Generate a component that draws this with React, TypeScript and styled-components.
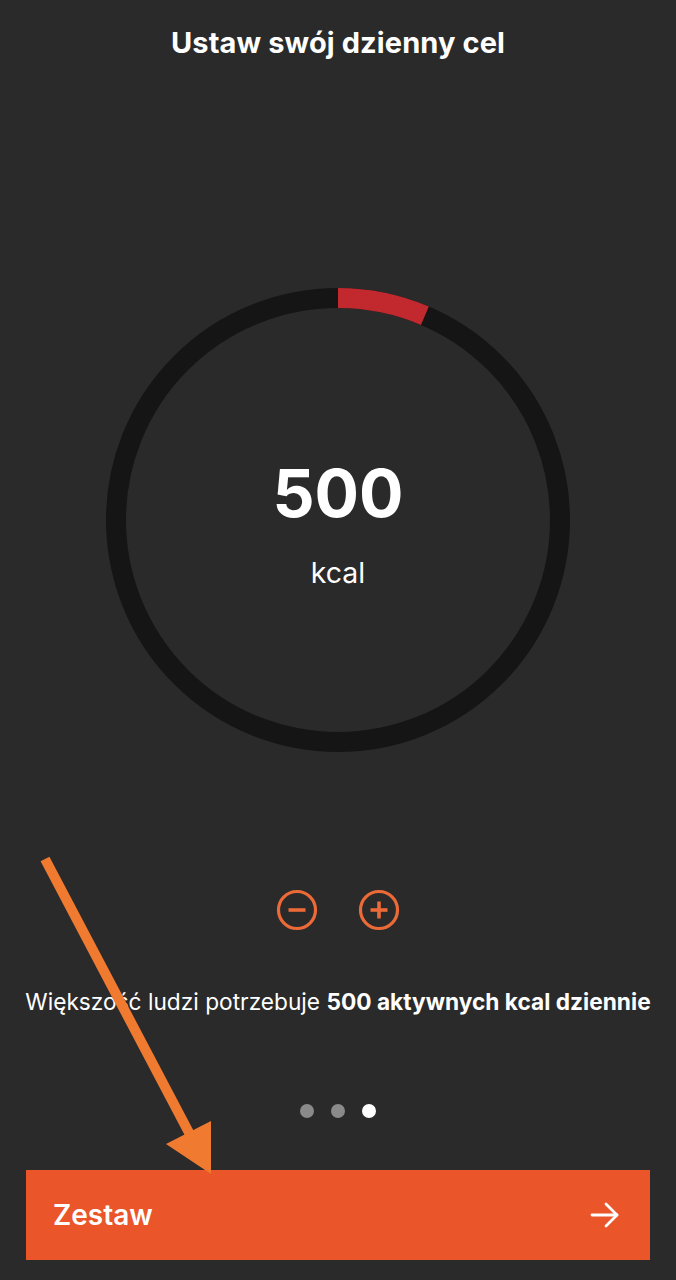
import { createGlobalStyle } from 'styled-components'
import styled from 'styled-components'

const GlobalStyle = createGlobalStyle`
  html, body {
    margin: 0;
    padding: 0;
    background: #2a2a2a;
  }
  body {
    font-family: 'Inter', 'Noto Sans', sans-serif;
    color: #fff;
  }
`

const Screen = styled.div`
  position: relative;
  width: 676px;
  height: 1280px;
  background: #2a2a2a;
  display: flex;
  flex-direction: column;
  align-items: center;
  overflow: hidden;
`

const Title = styled.h1`
  margin: 26px 0 0;
  font-size: 29px;
  font-weight: 700;
  line-height: 34px;
  letter-spacing: 0.1px;
`

const Dial = styled.div`
  position: relative;
  box-sizing: border-box;
  margin-top: 228px;
  padding-top: 10px;
  width: 464px;
  height: 464px;
  display: flex;
  flex-direction: column;
  align-items: center;
  justify-content: center;
`

const Ring = styled.svg`
  position: absolute;
  inset: 0;
`

const Value = styled.div`
  position: relative;
  font-size: 66px;
  font-weight: 700;
  line-height: 64px;
`

const Unit = styled.div`
  position: relative;
  margin-top: 32px;
  font-size: 28.5px;
  font-weight: 400;
  line-height: 32px;
`

const Controls = styled.div`
  margin-top: 136px;
  display: flex;
  gap: 38px;
`

const RoundButton = styled.button`
  width: 44px;
  height: 44px;
  padding: 0;
  border: none;
  background: none;
  cursor: pointer;
  display: flex;
  align-items: center;
  justify-content: center;
`

const Hint = styled.p`
  margin: 57px 0 0;
  font-size: 22.7px;
  line-height: 26px;
  font-weight: 400;
  white-space: nowrap;

  b {
    font-weight: 700;
  }
`

const Dots = styled.div`
  margin-top: 89px;
  display: flex;
  gap: 17px;
`

const Dot = styled.span<{ active?: boolean }>`
  width: 14px;
  height: 14px;
  border-radius: 50%;
  background: ${p => (p.active ? '#ffffff' : '#8a8a8a')};
`

const CtaButton = styled.button`
  margin-top: 52px;
  width: 624px;
  height: 90px;
  border: none;
  background: #ea5529;
  color: #fff;
  display: flex;
  align-items: center;
  justify-content: space-between;
  padding: 0 30px 0 27px;
  font-family: 'Inter', 'Noto Sans', sans-serif;
  font-size: 28px;
  font-weight: 600;
  cursor: pointer;
`

const Annotation = styled.svg`
  position: absolute;
  left: 0;
  top: 0;
  pointer-events: none;
`

const ORANGE = '#ec6a37'

function MinusIcon () {
  return (
    <svg width="44" height="44" viewBox="0 0 44 44">
      <circle cx="22" cy="22" r="18.5" fill="none" stroke={ORANGE} strokeWidth="3.2" />
      <line x1="13.5" y1="22" x2="30.5" y2="22" stroke={ORANGE} strokeWidth="3.6" />
    </svg>
  )
}

function PlusIcon () {
  return (
    <svg width="44" height="44" viewBox="0 0 44 44">
      <circle cx="22" cy="22" r="18.5" fill="none" stroke={ORANGE} strokeWidth="3.2" />
      <line x1="13.5" y1="22" x2="30.5" y2="22" stroke={ORANGE} strokeWidth="3.6" />
      <line x1="22" y1="13.5" x2="22" y2="30.5" stroke={ORANGE} strokeWidth="3.6" />
    </svg>
  )
}

function ArrowRight () {
  return (
    <svg width="30" height="30" viewBox="0 0 30 30" fill="none" stroke="#fff" strokeWidth="2.8" strokeLinecap="round" strokeLinejoin="round">
      <line x1="2" y1="15" x2="27" y2="15" />
      <polyline points="16,4 27,15 16,26" />
    </svg>
  )
}

export default function App () {
  const r = 222
  const circumference = 2 * Math.PI * r
  const progress = 0.064

  return (
    <>
      <GlobalStyle />
      <Screen>
        <Title>Ustaw swój dzienny cel</Title>

        <Dial>
          <Ring width="464" height="464" viewBox="0 0 464 464">
            <circle cx="232" cy="232" r={r} fill="none" stroke="#151515" strokeWidth="20" />
            <circle
              cx="232"
              cy="232"
              r={r}
              fill="none"
              stroke="#c1292f"
              strokeWidth="20"
              strokeDasharray={`${circumference * progress} ${circumference}`}
              transform="rotate(-90 232 232)"
            />
          </Ring>
          <Value>500</Value>
          <Unit>kcal</Unit>
        </Dial>

        <Controls>
          <RoundButton aria-label="minus"><MinusIcon /></RoundButton>
          <RoundButton aria-label="plus"><PlusIcon /></RoundButton>
        </Controls>

        <Hint>Większość ludzi potrzebuje <b>500 aktywnych kcal dziennie</b></Hint>

        <Dots>
          <Dot />
          <Dot />
          <Dot active />
        </Dots>

        <CtaButton>
          <span>Zestaw</span>
          <ArrowRight />
        </CtaButton>

        <Annotation width="676" height="1280" viewBox="0 0 676 1280">
          <line x1="45" y1="859" x2="196" y2="1146" stroke="#ef7a30" strokeWidth="10" />
          <polygon points="166,1144 211,1121 211,1174" fill="#ef7a30" />
        </Annotation>
      </Screen>
    </>
  )
}
